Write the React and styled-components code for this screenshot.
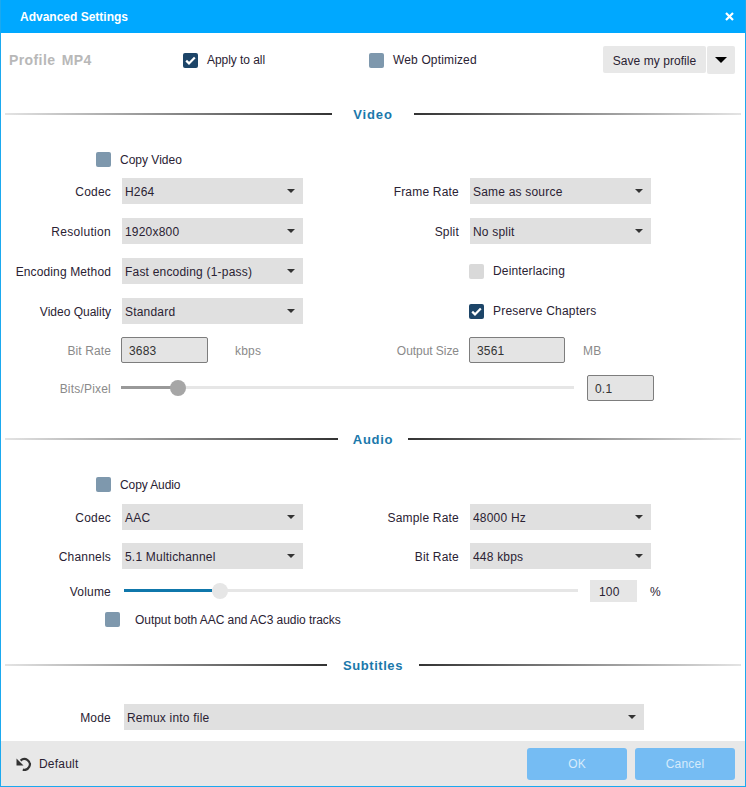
import React from 'react'
import styled, { createGlobalStyle } from 'styled-components'

const GlobalStyle = createGlobalStyle`
  html, body { margin: 0; padding: 0; background: #fff; }
  body { font-family: "Liberation Sans", Arial, sans-serif; font-size: 12px; color: #2a2233; }
`

const Window = styled.div`
  box-sizing: border-box;
  width: 746px;
  height: 787px;
  display: flex;
  flex-direction: column;
  border: 1px solid #1ba9ef;
  border-top: 0;
  background: #fff;
  overflow: hidden;
`

const TitleBar = styled.div`
  height: 33px;
  margin: 0 -1px;
  padding: 0 12px 0 20px;
  flex: none;
  display: flex;
  align-items: center;
  justify-content: space-between;
  background: #00a8ff;
  color: #fff;
  font-weight: bold;
`

const TopRow = styled.div`
  height: 28px;
  margin-top: 13px;
  padding-left: 8px;
  flex: none;
  display: flex;
  align-items: center;
`

const Profile = styled.div`
  width: 174px;
  font-size: 14px;
  font-weight: bold;
  color: #b8b8b8;
  letter-spacing: 0.4px;
  word-spacing: 2px;
`

const CheckRow = styled.label`
  display: flex;
  align-items: center;
  gap: ${p => p.$gap || 9}px;
  width: ${p => (p.$width ? p.$width + 'px' : 'auto')};
  margin-left: ${p => p.$left || 0}px;
  grid-column: ${p => p.$column || 'auto'};
  letter-spacing: ${p => p.$spacing ?? 0.2}px;
`

const CheckText = styled.span`
  padding-top: ${p => (p.$raised ? 0 : 1)}px;
`

const Box = styled.span`
  width: 15px;
  height: 15px;
  flex: none;
  display: flex;
  align-items: center;
  justify-content: center;
  border-radius: 2px;
  background: ${p => ({ on: '#1d4568', off: '#7e98ad', disabled: '#d9d9d9' }[p.$state])};
`

const SaveGroup = styled.div`
  margin-left: auto;
  margin-right: 10px;
  display: flex;
  gap: 1px;
`

const SaveButton = styled.button`
  width: 103px;
  height: 27px;
  padding: 2px 0 0;
  border: 0;
  border-radius: 2px;
  background: #e8e8e8;
  color: #2a2233;
  font: inherit;
  letter-spacing: 0.05px;
`

const SaveMenu = styled(SaveButton)`
  width: 28px;
  height: 28px;
  padding: 0;
  display: flex;
  align-items: center;
  justify-content: center;
`

const Heading = styled.div`
  height: 20px;
  margin-top: ${p => p.$top}px;
  padding: 0 4px;
  flex: none;
  display: flex;
  align-items: center;
  gap: ${p => p.$gap}px;
  font-size: 13px;
  font-weight: bold;
  letter-spacing: ${p => p.$spacing}px;
  color: #1a78ab;
`

const Rule = styled.div`
  flex: 1;
  height: 2px;
  background: linear-gradient(${p => (p.$flip ? 'to left' : 'to right')}, #e4e4e4, #333);
`

const FormRow = styled.div`
  display: grid;
  grid-template-columns: 110px 181px 145px 181px;
  column-gap: 11px;
  align-items: center;
  height: ${p => p.$height || 26}px;
  margin-top: ${p => p.$top}px;
  flex: none;
`

const FlexRow = styled.div`
  display: flex;
  align-items: center;
  height: ${p => p.$height || 26}px;
  margin-top: ${p => p.$top}px;
  padding-left: ${p => p.$left || 0}px;
  flex: none;
`

const Label = styled.div`
  flex: 0 0 110px;
  padding-top: 1px;
  text-align: right;
  letter-spacing: ${p => p.$spacing ?? 0.2}px;
  color: ${p => (p.$muted ? '#8a8a8a' : 'inherit')};
`

const SelectBox = styled.div`
  box-sizing: border-box;
  width: ${p => p.$width || 181}px;
  height: 26px;
  margin-left: ${p => p.$left || 0}px;
  padding: 0 8px 0 3px;
  display: flex;
  align-items: center;
  justify-content: space-between;
  background: #e0e0e0;
  letter-spacing: 0.2px;
`

const SelectText = styled.span`
  padding-top: 1px;
`

const Arrow = styled.span`
  width: 0;
  height: 0;
  border-left: ${p => p.$size}px solid transparent;
  border-right: ${p => p.$size}px solid transparent;
  border-top: ${p => p.$size}px solid ${p => p.$color};
`

const Unit = styled.div`
  display: flex;
  align-items: center;
  gap: ${p => p.$gap}px;
  margin-left: -1px;
  color: #8a8a8a;
  letter-spacing: 0.2px;
`

const UnitText = styled.span`
  padding-top: 1px;
`

const Percent = styled.div`
  margin-left: 13px;
  padding-top: 1px;
`

const NumberBox = styled.div`
  box-sizing: border-box;
  width: ${p => p.$width}px;
  height: 26px;
  padding: 1px 0 0 7px;
  display: flex;
  align-items: center;
  flex: none;
  border: 1px solid #7d7d7d;
  border-radius: 2px;
  background: #e4e4e4;
  color: #333;
  letter-spacing: 0.2px;
`

const ValueBox = styled.div`
  box-sizing: border-box;
  width: 47px;
  height: 22px;
  margin-left: 12px;
  padding: 1px 0 0 9px;
  display: flex;
  align-items: center;
  flex: none;
  background: #e6e6e6;
  letter-spacing: 0.2px;
`

const Slider = styled.div`
  position: relative;
  width: ${p => p.$width}px;
  height: 3px;
  margin: 0 ${p => p.$right}px 1px ${p => p.$left}px;
  flex: none;
  background: #e6e6e6;
`

const SliderFill = styled.div`
  height: 100%;
  background: ${p => p.$color};
`

const Thumb = styled.div`
  position: absolute;
  top: -6px;
  width: 16px;
  height: 16px;
  margin-left: -8px;
  border-radius: 50%;
  background: ${p => p.$color};
`

const Footer = styled.div`
  height: 45px;
  margin-top: auto;
  padding: 0 10px 0 15px;
  flex: none;
  display: flex;
  align-items: center;
  background: #e8e8e8;
`

const DefaultLink = styled.div`
  display: flex;
  align-items: center;
  gap: 7px;
  letter-spacing: 0.2px;
`

const Actions = styled.div`
  margin-left: auto;
  display: flex;
  gap: 8px;
`

const ActionButton = styled.button`
  width: 100px;
  height: 32px;
  padding: 0;
  border: 0;
  border-radius: 3px;
  background: #75bcf3;
  color: #d6ebfb;
  font: inherit;
  letter-spacing: 0.2px;
`

const Check = () => (
  <svg width="11" height="9" viewBox="0 0 11 9" fill="none">
    <path d="M1.2 4.6 L4 7.4 L9.8 1.4" stroke="#fff" strokeWidth="2.2" />
  </svg>
)

const CheckField = ({ state = 'off', raised, children, ...rest }) => (
  <CheckRow {...rest}>
    <Box $state={state}>{state === 'on' && <Check />}</Box>
    <CheckText $raised={raised}>{children}</CheckText>
  </CheckRow>
)

const Select = ({ value, ...rest }) => (
  <SelectBox {...rest}>
    <SelectText>{value}</SelectText>
    <Arrow $size={4} $color="#333" />
  </SelectBox>
)

export default function App() {
  return (
    <Window>
      <GlobalStyle />
      <TitleBar>
        Advanced Settings
        <svg width="9" height="9" viewBox="0 0 9 9">
          <path d="M1 1 L8 8 M8 1 L1 8" stroke="#fff" strokeWidth="2.2" />
        </svg>
      </TitleBar>

      <TopRow>
        <Profile>Profile MP4</Profile>
        <CheckField state="on" raised $width={186} $spacing={-0.05}>Apply to all</CheckField>
        <CheckField raised $spacing={0.15}>Web Optimized</CheckField>
        <SaveGroup>
          <SaveButton>Save my profile</SaveButton>
          <SaveMenu><Arrow $size={6} $color="#000" /></SaveMenu>
        </SaveGroup>
      </TopRow>

      <Heading $top={30} $gap={21} $spacing={0.85}><Rule />Video<Rule $flip /></Heading>

      <FlexRow $top={27} $height={16} $left={95}>
        <CheckField $spacing={0}>Copy Video</CheckField>
      </FlexRow>
      <FormRow $top={11}>
        <Label>Codec</Label><Select value="H264" />
        <Label>Frame Rate</Label><Select value="Same as source" />
      </FormRow>
      <FormRow $top={14}>
        <Label $spacing={0.3}>Resolution</Label><Select value="1920x800" />
        <Label>Split</Label><Select value="No split" />
      </FormRow>
      <FormRow $top={14}>
        <Label $spacing={0.13}>Encoding Method</Label><Select value="Fast encoding (1-pass)" />
        <CheckField state="disabled" raised $column={4} $left={-1} $spacing={0.15}>Deinterlacing</CheckField>
      </FormRow>
      <FormRow $top={14}>
        <Label $spacing={0}>Video Quality</Label><Select value="Standard" />
        <CheckField state="on" raised $column={4} $left={-1}>Preserve Chapters</CheckField>
      </FormRow>
      <FormRow $top={13}>
        <Label $muted $spacing={0.1}>Bit Rate</Label>
        <Unit $gap={27}><NumberBox $width={87}>3683</NumberBox><UnitText>kbps</UnitText></Unit>
        <Label $muted $spacing={-0.05}>Output Size</Label>
        <Unit $gap={18}><NumberBox $width={96}>3561</NumberBox><UnitText>MB</UnitText></Unit>
      </FormRow>
      <FlexRow $top={12}>
        <Label $muted>Bits/Pixel</Label>
        <Slider $width={453} $left={10} $right={13}>
          <SliderFill $color="#999" style={{ width: 56 }} />
          <Thumb $color="#a6a6a6" style={{ left: 57 }} />
        </Slider>
        <NumberBox $width={67}>0.1</NumberBox>
      </FlexRow>

      <Heading $top={28} $gap={15} $spacing={0.7}><Rule />Audio<Rule $flip /></Heading>

      <FlexRow $top={27} $height={16} $left={95}>
        <CheckField $spacing={-0.1}>Copy Audio</CheckField>
      </FlexRow>
      <FormRow $top={12}>
        <Label>Codec</Label><Select value="AAC" />
        <Label>Sample Rate</Label><Select value="48000 Hz" />
      </FormRow>
      <FormRow $top={13}>
        <Label>Channels</Label><Select value="5.1 Multichannel" />
        <Label>Bit Rate</Label><Select value="448 kbps" />
      </FormRow>
      <FlexRow $top={11} $height={22}>
        <Label>Volume</Label>
        <Slider $width={454} $left={13} $right={0}>
          <SliderFill $color="#0f77ab" style={{ width: 88 }} />
          <Thumb $color="#e6e6e6" style={{ left: 96 }} />
        </Slider>
        <ValueBox>100</ValueBox>
        <Percent>%</Percent>
      </FlexRow>
      <FlexRow $top={9} $height={16} $left={104}>
        <CheckField $gap={15} $spacing={-0.05}>Output both AAC and AC3 audio tracks</CheckField>
      </FlexRow>

      <Heading $top={28} $gap={16} $spacing={0.55}><Rule />Subtitles<Rule $flip /></Heading>

      <FlexRow $top={29}>
        <Label>Mode</Label>
        <Select value="Remux into file" $width={520} $left={13} />
      </FlexRow>

      <Footer>
        <DefaultLink>
          <svg width="16" height="14" viewBox="0 0 16 14" fill="none">
            <path d="M4.6 3.6 A5.4 5.4 0 1 1 6.8 12.6" stroke="#333" strokeWidth="2.2" />
            <path d="M0.5 1.5 L0.5 8.5 L7.5 8.5 Z" fill="#333" />
          </svg>
          Default
        </DefaultLink>
        <Actions>
          <ActionButton>OK</ActionButton>
          <ActionButton>Cancel</ActionButton>
        </Actions>
      </Footer>
    </Window>
  )
}
